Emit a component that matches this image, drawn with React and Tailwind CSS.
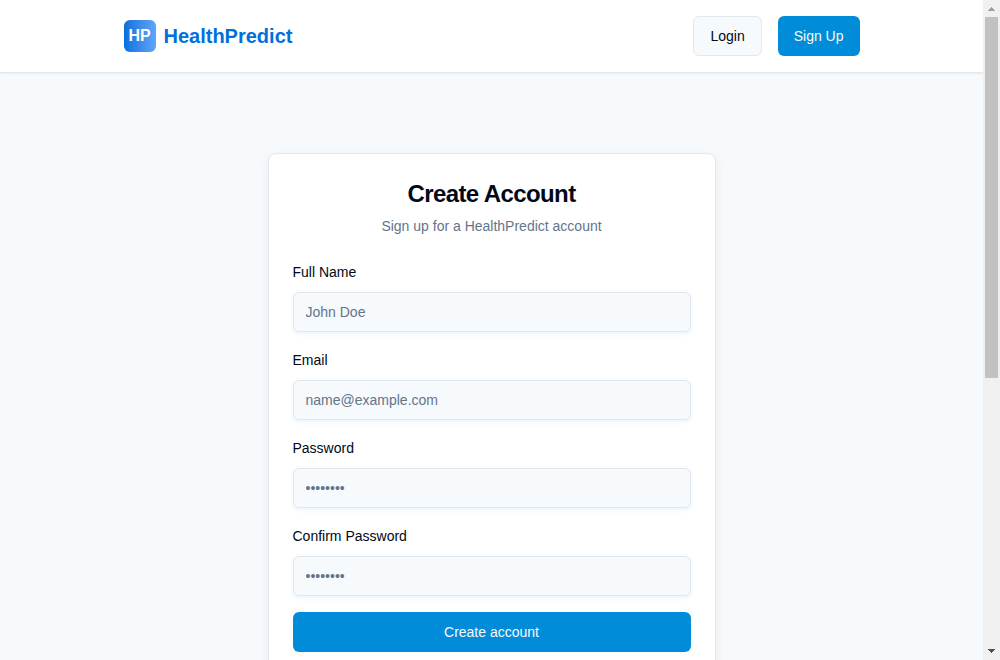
const fields = [
  { id: 'name', label: 'Full Name', type: 'text', placeholder: 'John Doe' },
  { id: 'email', label: 'Email', type: 'email', placeholder: 'name@example.com' },
  { id: 'password', label: 'Password', type: 'password', placeholder: '••••••••' },
  { id: 'confirm', label: 'Confirm Password', type: 'password', placeholder: '••••••••' },
];

function Header() {
  return (
    <header className="h-[73px] shrink-0 border-b border-[#e2e8f0] bg-white shadow-[0_1px_2px_rgba(0,0,0,0.05)]">
      <div className="mx-auto flex h-[72px] w-[736px] items-center justify-between">
        <div className="flex items-center gap-2">
          <div className="flex h-8 w-8 items-center justify-center rounded-md bg-linear-to-r from-[#0070dc] to-[#60a5fa] font-bold text-white">
            <span>HP</span>
          </div>
          <span className="text-xl font-bold text-[#0070dc]">HealthPredict</span>
        </div>
        <div className="flex items-center gap-4">
          <button className="h-10 rounded-md border border-[#e2e8f0] bg-[#f6fafd] px-4 text-sm text-[#020817]">Login</button>
          <button className="h-10 rounded-md bg-[#008cd9] px-4 text-sm text-[#f8fafc]">Sign Up</button>
        </div>
      </div>
    </header>
  );
}

function Field({ id, label, type, placeholder }) {
  return (
    <div className="flex flex-col gap-2">
      <label htmlFor={id} className="text-sm leading-6 text-[#020817]">{label}</label>
      <input
        id={id}
        type={type}
        placeholder={placeholder}
        className="h-10 w-full rounded-md border border-[#dfe7f1] bg-[#f6fafd] px-3 text-sm shadow-[0_2px_4px_rgba(59,130,246,0.1)] placeholder:text-[#64748b]"
      />
    </div>
  );
}

function Scrollbar() {
  return (
    <div className="flex h-full w-[17px] shrink-0 flex-col items-center bg-[#f0f0f0]">
      <div className="flex h-[17px] w-full items-center justify-center pt-px">
        <svg width="7" height="4" viewBox="0 0 7 4" shapeRendering="crispEdges" fill="#a0a0a0">
          <path d="M3 0h1v1h1v1h1v1h1v1H0V3h1V2h1V1h1z" />
        </svg>
      </div>
      <div className="h-[361px] w-[13px] bg-[#c1c1c1]" />
      <div className="mt-auto flex h-[17px] w-full items-center justify-center pb-px">
        <svg width="7" height="4" viewBox="0 0 7 4" shapeRendering="crispEdges" fill="#505050">
          <path d="M0 0h7v1H6v1H5v1H4v1H3V3H2V2H1V1H0z" />
        </svg>
      </div>
    </div>
  );
}

export default function App() {
  return (
    <div className="flex h-screen overflow-hidden font-['Liberation_Sans',Arial,sans-serif]">
      <div className="flex h-full min-w-0 flex-1 flex-col overflow-hidden bg-[#f6fafd]">
        <Header />
        <main className="flex justify-center pt-20">
          <div className="h-[580px] w-full max-w-md shrink-0 rounded-lg border border-[#e2e8f0] bg-white p-6 shadow-[0_4px_12px_rgba(0,0,0,0.06)]">
            <div className="flex flex-col gap-1.5 pb-6 text-center">
              <h1 className="text-2xl font-bold tracking-tight text-[#020817]">Create Account</h1>
              <p className="text-sm text-[#64748b]">Sign up for a HealthPredict account</p>
            </div>
            <form className="flex flex-col gap-4">
              {fields.map((field) => (
                <Field key={field.id} {...field} />
              ))}
              <button type="button" className="h-10 w-full rounded-md bg-[#008cd9] text-sm text-[#f8fafc]">Create account</button>
            </form>
          </div>
        </main>
      </div>
      <Scrollbar />
    </div>
  );
}
